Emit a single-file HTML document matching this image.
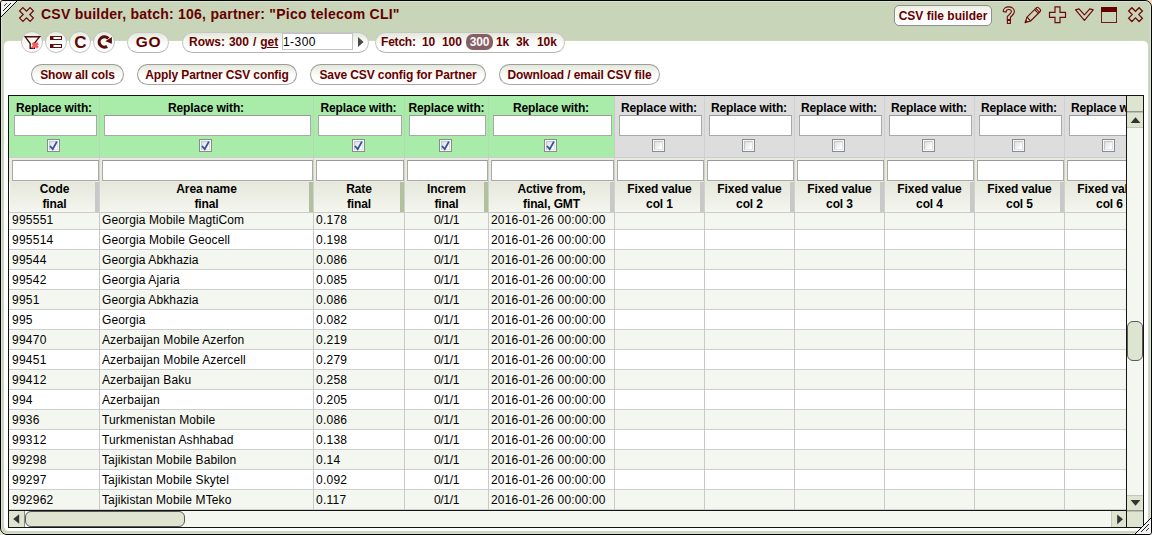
<!DOCTYPE html>
<html><head><meta charset="utf-8"><title>CSV builder</title>
<style>
html,body{margin:0;padding:0;}
body{width:1152px;height:535px;overflow:hidden;background:#f3dcc6;font-family:"Liberation Sans",sans-serif;font-size:12px;color:#000;position:relative;}
*{box-sizing:border-box;}
.abs{position:absolute;}
#win{position:absolute;left:0;top:0;width:1152px;height:535px;border:1px solid #000;background:#c9d5b8;border-radius:3px 7px 3px 7px;overflow:hidden;}
#hl{position:absolute;left:0;top:0;right:0;bottom:0;border:1px solid #dbe5c9;border-radius:2px 6px 2px 6px;}
#content{position:absolute;left:2px;top:39px;width:1146px;height:492px;background:#fff;border:1px solid #d0d5c6;border-radius:6px 6px 0 6px;}
#title{position:absolute;left:40px;top:4px;font-weight:bold;font-size:14px;letter-spacing:0.24px;color:#600;white-space:nowrap;line-height:18px;}
.btn{position:absolute;height:21px;border:1px solid #c6c6c6;border-bottom-color:#b4b4b4;border-radius:11px;background:linear-gradient(#e3e7d8 0%,#f4f6ef 35%,#ffffff 65%);color:#600;font-weight:bold;font-size:12px;line-height:19px;text-align:center;white-space:nowrap;letter-spacing:0;}
.btn.r2{border-color:#9c9c9c;border-bottom-color:#a8a8a8;padding-top:1px;letter-spacing:-0.11px;}
.circ{position:absolute;width:22px;height:22px;top:30px;border:1px solid #c4c4c4;border-radius:11px;background:linear-gradient(#e9ecdf 0%,#f6f7f2 40%,#ffffff 70%);}
.circ svg{position:absolute;left:-1px;top:-1px;}
#grid{position:absolute;left:7px;top:94px;width:1136px;height:433px;border:1px solid #141414;background:#fff;}
#view{position:absolute;left:0;top:0;width:1117px;height:414px;overflow:hidden;background:#fff;}
.rw{position:absolute;left:0;width:1117px;height:20px;border-bottom:1px solid #cfcfcf;}
.rw.alt{background:#f4f6f0;}
.c{position:absolute;top:1px;height:18px;line-height:19px;padding-left:2px;white-space:nowrap;overflow:hidden;font-size:12px;color:#000;}
.vd{position:absolute;width:1px;background:#c9c9c9;}
.rep{position:absolute;top:0;height:61px;text-align:center;font-weight:bold;font-size:12px;}
.rep.g{background:#a9eca9;}
.rep.n{background:#dddddd;}
.rep span{position:absolute;left:0;right:0;top:4px;line-height:16px;white-space:nowrap;letter-spacing:-0.1px;}
.in{position:absolute;background:#fff;border:1px solid #a9a9a9;border-top-color:#9a9a9a;}
.cb{position:absolute;top:43px;width:13px;height:13px;border:1px solid #8a8b8b;background:#f6f6f6;}
.cb::before{content:'';box-sizing:border-box;position:absolute;left:1px;top:1px;width:9px;height:9px;border:1px solid;border-color:#c2c6cb #dfe2e5 #e4e6e9 #c2c6cb;background:linear-gradient(135deg,#dcdfe4 0%,#eceef0 45%,#ffffff 85%);}
.hd{position:absolute;top:86px;height:30px;background:linear-gradient(#e5e8db,#f4f6ef);text-align:center;font-weight:bold;font-size:12px;line-height:15px;white-space:nowrap;letter-spacing:-0.1px;}
.hdl{position:absolute;top:86px;width:4px;height:30px;}
#fbar{position:absolute;left:0;top:62px;width:1117px;height:24px;background:#e8ebe0;}
</style></head><body>
<div style="position:absolute;left:0;top:529px;width:6px;height:6px;background:#ebe7df"></div>
<div id="win">
<div id="hl"></div>

<svg class="abs" style="left:15px;top:3px" width="22" height="22" viewBox="0 0 22 22"><polygon points="3.60,6.90 6.90,3.60 10.50,7.20 14.10,3.60 17.40,6.90 13.80,10.50 17.40,14.10 14.10,17.40 10.50,13.80 6.90,17.40 3.60,14.10 7.20,10.50" fill="none" stroke="#6e0a0a" stroke-width="1.25" stroke-linejoin="miter"/></svg>
<div id="title">CSV builder, batch: 106, partner: "Pico telecom CLI"</div>
<div class="btn" style="left:893px;top:4px;width:98px;height:21px;border-radius:5px;border-color:#8e8e8e;line-height:19px;padding-top:1px;background:linear-gradient(#ecefe5 0%,#ffffff 60%);">CSV file builder</div>
<svg class="abs" style="left:999px;top:3px" width="20" height="22" viewBox="0 0 20 22"><path d="M3.2,7.6 C3.2,4.6 5.6,2.9 8.6,2.9 C11.9,2.9 14.4,4.7 14.4,7.5 C14.4,10.2 12.3,11 10.5,13.2 L10.5,15.6 L7.3,15.6 L7.3,12.6 C8.8,10.4 11.4,9.6 11.4,7.5 C11.4,6.2 10.3,5.5 8.7,5.5 C7.1,5.5 6.2,6.4 6,8.1 Z" fill="none" stroke="#6e0a0a" stroke-width="1.1"/><rect x="7.4" y="16.4" width="3" height="3" fill="none" stroke="#6e0a0a" stroke-width="1.1"/></svg>
<svg class="abs" style="left:1021px;top:3px" width="22" height="22" viewBox="0 0 22 22"><g fill="none" stroke="#6e0a0a" stroke-width="1.1" stroke-linejoin="round"><path d="M3,18.6 L5,13.2 L14.6,3.6 Q15.6,2.8 16.6,3.8 L18.2,5.4 Q19.2,6.5 18.2,7.5 L8.6,17 Z"/><path d="M5,13.2 L8.6,17"/><path d="M12.6,5.6 L16.4,9.4"/><path d="M13.8,4.4 L17.6,8.2"/></g><path d="M3,18.6 L4,15.8 L5.9,17.7 Z" fill="#6e0a0a"/></svg>
<svg class="abs" style="left:1046px;top:3px" width="22" height="22" viewBox="0 0 22 22"><path d="M8,2.9 L13,2.9 L13,8.3 L18.5,8.3 L18.5,13.3 L13,13.3 L13,18.7 L8,18.7 L8,13.3 L2.5,13.3 L2.5,8.3 L8,8.3 Z" fill="none" stroke="#6e0a0a" stroke-width="1.2"/></svg>
<svg class="abs" style="left:1072px;top:3px" width="22" height="22" viewBox="0 0 22 22"><path d="M2.6,5.8 L6,4.8 L11.4,10.9 L16.8,4.8 L20.2,5.8 L11.4,16.4 Z" fill="none" stroke="#6e0a0a" stroke-width="1.2" stroke-linejoin="round"/></svg>
<svg class="abs" style="left:1098px;top:3px" width="22" height="22" viewBox="0 0 22 22"><rect x="2.5" y="3.5" width="15" height="15" fill="none" stroke="#74181a" stroke-width="1"/><rect x="2" y="3" width="16" height="5" fill="#600"/></svg>
<svg class="abs" style="left:1124px;top:3px" width="22" height="22" viewBox="0 0 22 22"><polygon points="3.60,7.00 6.90,3.70 10.50,7.30 14.10,3.70 17.40,7.00 13.80,10.60 17.40,14.20 14.10,17.50 10.50,13.90 6.90,17.50 3.60,14.20 7.20,10.60" fill="none" stroke="#6e0a0a" stroke-width="1.25" stroke-linejoin="miter"/></svg>
<div id="content"></div>
<div class="circ" style="left:20px"></div>
<div class="circ" style="left:44px"></div>
<div class="circ" style="left:68px"></div>
<div class="circ" style="left:92px"></div>
<svg class="abs" style="left:20px;top:30px" width="22" height="22" viewBox="21 31 22 22"><path d="M25.2,36.8 L39.6,36.8 L34.3,43.4 L34.3,48.2 L30.2,48.2 L30.2,43.6 Z" fill="none" stroke="#4d0c0c" stroke-width="1.4" stroke-linejoin="miter"/><path d="M32.4,43.1 L37.9,47.7 M37.9,43.1 L32.4,47.7" stroke="#f55c5c" stroke-width="2.7" stroke-linecap="butt"/></svg>
<svg class="abs" style="left:44px;top:30px" width="22" height="22" viewBox="45 31 22 22"><rect x="50.5" y="36.5" width="11" height="3" fill="#fff" stroke="#5a1010" stroke-width="1"/><rect x="50" y="36" width="3.5" height="4" fill="#5a1010"/><rect x="50.5" y="44.5" width="11" height="3" fill="#fff" stroke="#5a1010" stroke-width="1"/><rect x="50" y="44" width="3.5" height="4" fill="#5a1010"/></svg>
<svg class="abs" style="left:68px;top:30px" width="22" height="22" viewBox="69 31 22 22"><text x="80.4" y="48" text-anchor="middle" font-family="Liberation Sans, sans-serif" font-weight="bold" font-size="17" fill="#5a0808">C</text></svg>
<svg class="abs" style="left:92px;top:30px" width="22" height="22" viewBox="93 31 22 22"><path d="M108.3,38.6 A5.2,5.2 0 1 0 107.1,46.4" fill="none" stroke="#5a0c0c" stroke-width="3.1"/><path d="M111.9,37 L105.4,41.2 L111.9,43.7 Z" fill="#5a0c0c"/></svg>
<div class="btn" style="left:126px;top:31px;width:42px;font-size:15.5px;letter-spacing:0.6px;padding-left:1px;line-height:18px;">GO</div>
<div class="btn" style="left:181px;top:31px;width:187px;text-align:left;padding-left:6px;word-spacing:0.6px;">Rows: 300 / <span style="text-decoration:underline">get</span></div>
<div class="in abs" style="left:281px;top:32px;width:71px;height:17px;border-color:#c2c2c2;font-size:12px;line-height:16px;padding-left:0;letter-spacing:0.45px;color:#000;">1-300</div>
<svg class="abs" style="left:355px;top:35px" width="10" height="12" viewBox="0 0 10 12"><polygon points="2,1 7.6,6 2,11" fill="#4a4a4a"/></svg>
<div class="btn" style="left:374px;top:31px;width:190px;text-align:left;padding-left:5px;letter-spacing:-0.2px;">Fetch:</div>
<div class="abs" style="left:421px;top:32px;color:#600;font-weight:bold;font-size:12px;line-height:19px;letter-spacing:-0.1px;">10</div>
<div class="abs" style="left:441px;top:32px;color:#600;font-weight:bold;font-size:12px;line-height:19px;letter-spacing:-0.1px;">100</div>
<div class="abs" style="left:495px;top:32px;color:#600;font-weight:bold;font-size:12px;line-height:19px;letter-spacing:-0.1px;">1k</div>
<div class="abs" style="left:515px;top:32px;color:#600;font-weight:bold;font-size:12px;line-height:19px;letter-spacing:-0.1px;">3k</div>
<div class="abs" style="left:536px;top:32px;color:#600;font-weight:bold;font-size:12px;line-height:19px;letter-spacing:-0.1px;">10k</div>
<div class="abs" style="left:465px;top:33px;width:27px;height:16px;border-radius:7px;background:#846060;color:#fbf8fc;font-weight:bold;font-size:12px;line-height:16px;text-align:center;letter-spacing:-0.1px;">300</div>
<div class="btn r2" style="left:30px;top:63px;width:93px;">Show all cols</div>
<div class="btn r2" style="left:136px;top:63px;width:160px;">Apply Partner CSV config</div>
<div class="btn r2" style="left:309px;top:63px;width:176px;">Save CSV config for Partner</div>
<div class="btn r2" style="left:498px;top:63px;width:161px;">Download / email CSV file</div>
<div id="grid"><div id="view">
<div class="rw alt" style="top:114px">
<div class="c" style="left:1px;width:89px;letter-spacing:0.25px;">995551</div>
<div class="c" style="left:91px;width:213px;letter-spacing:0.12px;">Georgia Mobile MagtiCom</div>
<div class="c" style="left:305px;width:90px;letter-spacing:0.25px;">0.178</div>
<div class="c" style="left:396px;width:83px;text-align:center;padding-left:0;letter-spacing:-0.3px;">0/1/1</div>
<div class="c" style="left:480px;width:125px;letter-spacing:0.17px;">2016-01-26 00:00:00</div>
</div>
<div class="rw" style="top:134px">
<div class="c" style="left:1px;width:89px;letter-spacing:0.25px;">995514</div>
<div class="c" style="left:91px;width:213px;letter-spacing:0.12px;">Georgia Mobile Geocell</div>
<div class="c" style="left:305px;width:90px;letter-spacing:0.25px;">0.198</div>
<div class="c" style="left:396px;width:83px;text-align:center;padding-left:0;letter-spacing:-0.3px;">0/1/1</div>
<div class="c" style="left:480px;width:125px;letter-spacing:0.17px;">2016-01-26 00:00:00</div>
</div>
<div class="rw alt" style="top:154px">
<div class="c" style="left:1px;width:89px;letter-spacing:0.25px;">99544</div>
<div class="c" style="left:91px;width:213px;letter-spacing:0.12px;">Georgia Abkhazia</div>
<div class="c" style="left:305px;width:90px;letter-spacing:0.25px;">0.086</div>
<div class="c" style="left:396px;width:83px;text-align:center;padding-left:0;letter-spacing:-0.3px;">0/1/1</div>
<div class="c" style="left:480px;width:125px;letter-spacing:0.17px;">2016-01-26 00:00:00</div>
</div>
<div class="rw" style="top:174px">
<div class="c" style="left:1px;width:89px;letter-spacing:0.25px;">99542</div>
<div class="c" style="left:91px;width:213px;letter-spacing:0.12px;">Georgia Ajaria</div>
<div class="c" style="left:305px;width:90px;letter-spacing:0.25px;">0.085</div>
<div class="c" style="left:396px;width:83px;text-align:center;padding-left:0;letter-spacing:-0.3px;">0/1/1</div>
<div class="c" style="left:480px;width:125px;letter-spacing:0.17px;">2016-01-26 00:00:00</div>
</div>
<div class="rw alt" style="top:194px">
<div class="c" style="left:1px;width:89px;letter-spacing:0.25px;">9951</div>
<div class="c" style="left:91px;width:213px;letter-spacing:0.12px;">Georgia Abkhazia</div>
<div class="c" style="left:305px;width:90px;letter-spacing:0.25px;">0.086</div>
<div class="c" style="left:396px;width:83px;text-align:center;padding-left:0;letter-spacing:-0.3px;">0/1/1</div>
<div class="c" style="left:480px;width:125px;letter-spacing:0.17px;">2016-01-26 00:00:00</div>
</div>
<div class="rw" style="top:214px">
<div class="c" style="left:1px;width:89px;letter-spacing:0.25px;">995</div>
<div class="c" style="left:91px;width:213px;letter-spacing:0.12px;">Georgia</div>
<div class="c" style="left:305px;width:90px;letter-spacing:0.25px;">0.082</div>
<div class="c" style="left:396px;width:83px;text-align:center;padding-left:0;letter-spacing:-0.3px;">0/1/1</div>
<div class="c" style="left:480px;width:125px;letter-spacing:0.17px;">2016-01-26 00:00:00</div>
</div>
<div class="rw alt" style="top:234px">
<div class="c" style="left:1px;width:89px;letter-spacing:0.25px;">99470</div>
<div class="c" style="left:91px;width:213px;letter-spacing:0.12px;">Azerbaijan Mobile Azerfon</div>
<div class="c" style="left:305px;width:90px;letter-spacing:0.25px;">0.219</div>
<div class="c" style="left:396px;width:83px;text-align:center;padding-left:0;letter-spacing:-0.3px;">0/1/1</div>
<div class="c" style="left:480px;width:125px;letter-spacing:0.17px;">2016-01-26 00:00:00</div>
</div>
<div class="rw" style="top:254px">
<div class="c" style="left:1px;width:89px;letter-spacing:0.25px;">99451</div>
<div class="c" style="left:91px;width:213px;letter-spacing:0.12px;">Azerbaijan Mobile Azercell</div>
<div class="c" style="left:305px;width:90px;letter-spacing:0.25px;">0.279</div>
<div class="c" style="left:396px;width:83px;text-align:center;padding-left:0;letter-spacing:-0.3px;">0/1/1</div>
<div class="c" style="left:480px;width:125px;letter-spacing:0.17px;">2016-01-26 00:00:00</div>
</div>
<div class="rw alt" style="top:274px">
<div class="c" style="left:1px;width:89px;letter-spacing:0.25px;">99412</div>
<div class="c" style="left:91px;width:213px;letter-spacing:0.12px;">Azerbaijan Baku</div>
<div class="c" style="left:305px;width:90px;letter-spacing:0.25px;">0.258</div>
<div class="c" style="left:396px;width:83px;text-align:center;padding-left:0;letter-spacing:-0.3px;">0/1/1</div>
<div class="c" style="left:480px;width:125px;letter-spacing:0.17px;">2016-01-26 00:00:00</div>
</div>
<div class="rw" style="top:294px">
<div class="c" style="left:1px;width:89px;letter-spacing:0.25px;">994</div>
<div class="c" style="left:91px;width:213px;letter-spacing:0.12px;">Azerbaijan</div>
<div class="c" style="left:305px;width:90px;letter-spacing:0.25px;">0.205</div>
<div class="c" style="left:396px;width:83px;text-align:center;padding-left:0;letter-spacing:-0.3px;">0/1/1</div>
<div class="c" style="left:480px;width:125px;letter-spacing:0.17px;">2016-01-26 00:00:00</div>
</div>
<div class="rw alt" style="top:314px">
<div class="c" style="left:1px;width:89px;letter-spacing:0.25px;">9936</div>
<div class="c" style="left:91px;width:213px;letter-spacing:0.12px;">Turkmenistan Mobile</div>
<div class="c" style="left:305px;width:90px;letter-spacing:0.25px;">0.086</div>
<div class="c" style="left:396px;width:83px;text-align:center;padding-left:0;letter-spacing:-0.3px;">0/1/1</div>
<div class="c" style="left:480px;width:125px;letter-spacing:0.17px;">2016-01-26 00:00:00</div>
</div>
<div class="rw" style="top:334px">
<div class="c" style="left:1px;width:89px;letter-spacing:0.25px;">99312</div>
<div class="c" style="left:91px;width:213px;letter-spacing:0.12px;">Turkmenistan Ashhabad</div>
<div class="c" style="left:305px;width:90px;letter-spacing:0.25px;">0.138</div>
<div class="c" style="left:396px;width:83px;text-align:center;padding-left:0;letter-spacing:-0.3px;">0/1/1</div>
<div class="c" style="left:480px;width:125px;letter-spacing:0.17px;">2016-01-26 00:00:00</div>
</div>
<div class="rw alt" style="top:354px">
<div class="c" style="left:1px;width:89px;letter-spacing:0.25px;">99298</div>
<div class="c" style="left:91px;width:213px;letter-spacing:0.12px;">Tajikistan Mobile Babilon</div>
<div class="c" style="left:305px;width:90px;letter-spacing:0.25px;">0.14</div>
<div class="c" style="left:396px;width:83px;text-align:center;padding-left:0;letter-spacing:-0.3px;">0/1/1</div>
<div class="c" style="left:480px;width:125px;letter-spacing:0.17px;">2016-01-26 00:00:00</div>
</div>
<div class="rw" style="top:374px">
<div class="c" style="left:1px;width:89px;letter-spacing:0.25px;">99297</div>
<div class="c" style="left:91px;width:213px;letter-spacing:0.12px;">Tajikistan Mobile Skytel</div>
<div class="c" style="left:305px;width:90px;letter-spacing:0.25px;">0.092</div>
<div class="c" style="left:396px;width:83px;text-align:center;padding-left:0;letter-spacing:-0.3px;">0/1/1</div>
<div class="c" style="left:480px;width:125px;letter-spacing:0.17px;">2016-01-26 00:00:00</div>
</div>
<div class="rw alt" style="top:394px">
<div class="c" style="left:1px;width:89px;letter-spacing:0.25px;">992962</div>
<div class="c" style="left:91px;width:213px;letter-spacing:0.12px;">Tajikistan Mobile MTeko</div>
<div class="c" style="left:305px;width:90px;letter-spacing:0.25px;">0.117</div>
<div class="c" style="left:396px;width:83px;text-align:center;padding-left:0;letter-spacing:-0.3px;">0/1/1</div>
<div class="c" style="left:480px;width:125px;letter-spacing:0.17px;">2016-01-26 00:00:00</div>
</div>
<div class="vd" style="left:90px;top:117px;height:297px"></div>
<div class="vd" style="left:304px;top:117px;height:297px"></div>
<div class="vd" style="left:395px;top:117px;height:297px"></div>
<div class="vd" style="left:479px;top:117px;height:297px"></div>
<div class="vd" style="left:605px;top:117px;height:297px"></div>
<div class="vd" style="left:695px;top:117px;height:297px"></div>
<div class="vd" style="left:785px;top:117px;height:297px"></div>
<div class="vd" style="left:875px;top:117px;height:297px"></div>
<div class="vd" style="left:965px;top:117px;height:297px"></div>
<div class="vd" style="left:1055px;top:117px;height:297px"></div>
<div class="rep g" style="left:0px;width:90px;"><span>Replace with:</span></div>
<div class="in" style="left:5px;top:19px;width:83px;height:21px;"></div>
<div class="cb" style="left:38px"><svg width="11" height="11" viewBox="0 0 11 11" style="position:absolute;left:0;top:0"><path d="M2,6 L4.7,9.1 L8.9,1.6" fill="none" stroke="#3650a6" stroke-width="1.8"/></svg></div>
<div class="rep g" style="left:90px;width:214px;"><span>Replace with:</span></div>
<div class="in" style="left:95px;top:19px;width:207px;height:21px;"></div>
<div class="cb" style="left:190px"><svg width="11" height="11" viewBox="0 0 11 11" style="position:absolute;left:0;top:0"><path d="M2,6 L4.7,9.1 L8.9,1.6" fill="none" stroke="#3650a6" stroke-width="1.8"/></svg></div>
<div class="rep g" style="left:304px;width:91px;"><span>Replace with:</span></div>
<div class="in" style="left:309px;top:19px;width:84px;height:21px;"></div>
<div class="cb" style="left:343px"><svg width="11" height="11" viewBox="0 0 11 11" style="position:absolute;left:0;top:0"><path d="M2,6 L4.7,9.1 L8.9,1.6" fill="none" stroke="#3650a6" stroke-width="1.8"/></svg></div>
<div class="rep g" style="left:395px;width:84px;"><span style="left:1px">Replace with:</span></div>
<div class="in" style="left:400px;top:19px;width:77px;height:21px;"></div>
<div class="cb" style="left:430px"><svg width="11" height="11" viewBox="0 0 11 11" style="position:absolute;left:0;top:0"><path d="M2,6 L4.7,9.1 L8.9,1.6" fill="none" stroke="#3650a6" stroke-width="1.8"/></svg></div>
<div class="rep g" style="left:479px;width:126px;"><span>Replace with:</span></div>
<div class="in" style="left:484px;top:19px;width:119px;height:21px;"></div>
<div class="cb" style="left:535px"><svg width="11" height="11" viewBox="0 0 11 11" style="position:absolute;left:0;top:0"><path d="M2,6 L4.7,9.1 L8.9,1.6" fill="none" stroke="#3650a6" stroke-width="1.8"/></svg></div>
<div class="rep n" style="left:605px;width:90px;"><span>Replace with:</span></div>
<div class="in" style="left:610px;top:19px;width:83px;height:21px;"></div>
<div class="cb" style="left:643px"></div>
<div class="rep n" style="left:695px;width:90px;"><span>Replace with:</span></div>
<div class="in" style="left:700px;top:19px;width:83px;height:21px;"></div>
<div class="cb" style="left:733px"></div>
<div class="rep n" style="left:785px;width:90px;"><span>Replace with:</span></div>
<div class="in" style="left:790px;top:19px;width:83px;height:21px;"></div>
<div class="cb" style="left:823px"></div>
<div class="rep n" style="left:875px;width:90px;"><span>Replace with:</span></div>
<div class="in" style="left:880px;top:19px;width:83px;height:21px;"></div>
<div class="cb" style="left:913px"></div>
<div class="rep n" style="left:965px;width:90px;"><span>Replace with:</span></div>
<div class="in" style="left:970px;top:19px;width:83px;height:21px;"></div>
<div class="cb" style="left:1003px"></div>
<div class="rep n" style="left:1055px;width:90px;"><span>Replace with:</span></div>
<div class="in" style="left:1060px;top:19px;width:83px;height:21px;"></div>
<div class="cb" style="left:1093px"></div>
<div class="vd" style="left:90px;top:0;height:61px;background:#b4d8b0"></div>
<div class="vd" style="left:304px;top:0;height:61px;background:#b4d8b0"></div>
<div class="vd" style="left:395px;top:0;height:61px;background:#b4d8b0"></div>
<div class="vd" style="left:479px;top:0;height:61px;background:#b4d8b0"></div>
<div class="vd" style="left:605px;top:0;height:61px;background:#c4cfc0"></div>
<div class="vd" style="left:695px;top:0;height:61px;background:#d0d0d0"></div>
<div class="vd" style="left:785px;top:0;height:61px;background:#d0d0d0"></div>
<div class="vd" style="left:875px;top:0;height:61px;background:#d0d0d0"></div>
<div class="vd" style="left:965px;top:0;height:61px;background:#d0d0d0"></div>
<div class="vd" style="left:1055px;top:0;height:61px;background:#d0d0d0"></div>
<div class="abs" style="left:0;top:61px;width:1117px;height:1px;background:#cdcdcd"></div>
<div id="fbar"></div>
<div class="in" style="left:3px;top:64px;width:87px;height:21px;"></div>
<div class="hd" style="left:1px;width:89px;">Code<br>final</div>
<div class="hdl" style="left:86px;background:#c8c8c8"></div>
<div class="in" style="left:93px;top:64px;width:211px;height:21px;"></div>
<div class="hd" style="left:91px;width:213px;">Area name<br>final</div>
<div class="hdl" style="left:300px;background:#b3c09d"></div>
<div class="in" style="left:307px;top:64px;width:88px;height:21px;"></div>
<div class="hd" style="left:305px;width:90px;">Rate<br>final</div>
<div class="hdl" style="left:391px;background:#b3c09d"></div>
<div class="in" style="left:398px;top:64px;width:81px;height:21px;"></div>
<div class="hd" style="left:396px;width:83px;">Increm<br>final</div>
<div class="hdl" style="left:475px;background:#b3c09d"></div>
<div class="in" style="left:482px;top:64px;width:123px;height:21px;"></div>
<div class="hd" style="left:480px;width:125px;">Active from,<br>final, GMT</div>
<div class="hdl" style="left:601px;background:#c8c8c8"></div>
<div class="in" style="left:608px;top:64px;width:87px;height:21px;"></div>
<div class="hd" style="left:606px;width:89px;">Fixed value<br>col 1</div>
<div class="hdl" style="left:691px;background:#c8c8c8"></div>
<div class="in" style="left:698px;top:64px;width:87px;height:21px;"></div>
<div class="hd" style="left:696px;width:89px;">Fixed value<br>col 2</div>
<div class="hdl" style="left:781px;background:#c8c8c8"></div>
<div class="in" style="left:788px;top:64px;width:87px;height:21px;"></div>
<div class="hd" style="left:786px;width:89px;">Fixed value<br>col 3</div>
<div class="hdl" style="left:871px;background:#c8c8c8"></div>
<div class="in" style="left:878px;top:64px;width:87px;height:21px;"></div>
<div class="hd" style="left:876px;width:89px;">Fixed value<br>col 4</div>
<div class="hdl" style="left:961px;background:#c8c8c8"></div>
<div class="in" style="left:968px;top:64px;width:87px;height:21px;"></div>
<div class="hd" style="left:966px;width:89px;">Fixed value<br>col 5</div>
<div class="hdl" style="left:1051px;background:#c8c8c8"></div>
<div class="in" style="left:1058px;top:64px;width:87px;height:21px;"></div>
<div class="hd" style="left:1056px;width:89px;">Fixed value<br>col 6</div>
<div class="hdl" style="left:1141px;background:#c8c8c8"></div>
<div class="vd" style="left:90px;top:62px;height:54px;background:#cfd2c8"></div>
<div class="vd" style="left:304px;top:62px;height:54px;background:#cfd2c8"></div>
<div class="vd" style="left:395px;top:62px;height:54px;background:#cfd2c8"></div>
<div class="vd" style="left:479px;top:62px;height:54px;background:#cfd2c8"></div>
<div class="vd" style="left:605px;top:62px;height:54px;background:#cfd2c8"></div>
<div class="vd" style="left:695px;top:62px;height:54px;background:#cfd2c8"></div>
<div class="vd" style="left:785px;top:62px;height:54px;background:#cfd2c8"></div>
<div class="vd" style="left:875px;top:62px;height:54px;background:#cfd2c8"></div>
<div class="vd" style="left:965px;top:62px;height:54px;background:#cfd2c8"></div>
<div class="vd" style="left:1055px;top:62px;height:54px;background:#cfd2c8"></div>
<div class="abs" style="left:0;top:116px;width:1117px;height:1px;background:#cbcbcb"></div>
</div>
<div class="abs" style="left:1117px;top:0;width:1px;height:431px;background:#141414"></div>
<div class="abs" style="left:1118px;top:0;width:16px;height:431px;background:#f4f7f0"></div>
<div class="abs" style="left:1118px;top:0;width:16px;height:15px;background:#dde4d0"></div>
<div class="abs" style="left:1118px;top:16px;width:16px;height:15px;background:#dde4d0"></div>
<div class="abs" style="left:1118px;top:15px;width:16px;height:1px;background:#929292"></div>
<div class="abs" style="left:1118px;top:16px;width:16px;height:1px;background:#bcc0b3"></div>
<div class="abs" style="left:1118px;top:31px;width:16px;height:1px;background:#c4c8bc"></div>
<svg class="abs" style="left:1118px;top:16px" width="16" height="15" viewBox="0 0 16 15"><polygon points="3.6,11 8.5,5.2 13.4,11" fill="#333"/></svg>
<div class="abs" style="left:1118px;top:225px;width:16px;height:40px;background:#dde4d0;border:1px solid #5a5a5a;border-radius:6px;"></div>
<div class="abs" style="left:1118px;top:399px;width:16px;height:1px;background:#c4c8bc"></div>
<div class="abs" style="left:1118px;top:400px;width:16px;height:14px;background:#dde4d0"></div>
<svg class="abs" style="left:1118px;top:400px" width="16" height="14" viewBox="0 0 16 14"><polygon points="3.6,4 13.4,4 8.5,9.8" fill="#333"/></svg>
<div class="abs" style="left:1118px;top:415px;width:16px;height:16px;background:#dde4d0"></div>
<div class="abs" style="left:1118px;top:414px;width:16px;height:1px;background:#929292"></div>
<div class="abs" style="left:1118px;top:415px;width:16px;height:1px;background:#bcc0b3"></div>
<div class="abs" style="left:0;top:414px;width:1117px;height:1px;background:#141414"></div>
<div class="abs" style="left:0;top:415px;width:1117px;height:16px;background:#f4f7f0"></div>
<div class="abs" style="left:0;top:415px;width:15px;height:16px;background:#dde4d0"></div>
<div class="abs" style="left:15px;top:415px;width:1px;height:16px;background:#8a8a8a"></div>
<svg class="abs" style="left:0;top:415px" width="15" height="16" viewBox="0 0 15 16"><polygon points="10.2,3.2 10.2,12.8 4.2,8" fill="#333"/></svg>
<div class="abs" style="left:16px;top:415px;width:160px;height:16px;background:#dde4d0;border:1px solid #5a5a5a;border-radius:6px;"></div>
<div class="abs" style="left:1103px;top:415px;width:14px;height:16px;background:#dde4d0"></div>
<div class="abs" style="left:1102px;top:415px;width:1px;height:16px;background:#c4c8bc"></div>
<svg class="abs" style="left:1102px;top:415px" width="15" height="16" viewBox="0 0 15 16"><polygon points="6.2,3.4 6.2,13.2 12,8.3" fill="#333"/></svg>
</div>
<svg class="abs" style="left:0;top:0" width="20" height="20" viewBox="0 0 20 20"><polygon points="0,0 15.6,0 0,15.6" fill="#f1f1f1"/><g shape-rendering="crispEdges" fill="none"><path d="M16,0 L0,16" stroke="#0a0a0a" stroke-width="1"/><path d="M2,10 L10,2" stroke="#1a1a1a" stroke-width="1"/><path d="M2.5,5.5 L5.5,2.5" stroke="#444" stroke-width="1"/></g></svg>
<svg class="abs" style="left:1131px;top:514px" width="19" height="19" viewBox="0 0 19 19"><polygon points="19,3.2 19,19 3.2,19" fill="#f1f1f1"/><g shape-rendering="crispEdges" fill="none"><path d="M19,3 L3,19" stroke="#0a0a0a" stroke-width="1"/><path d="M9,17 L17,9" stroke="#1a1a1a" stroke-width="1"/><path d="M13.5,16.5 L16.5,13.5" stroke="#444" stroke-width="1"/></g></svg>
</div></body></html>
